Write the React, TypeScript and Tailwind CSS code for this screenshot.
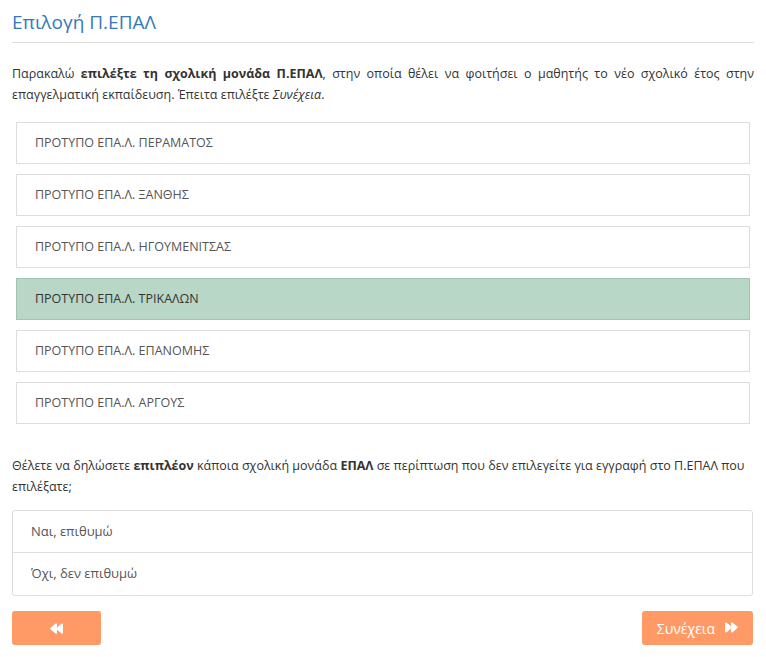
import React from 'react';

const SCHOOLS = [
  'ΠΡΟΤΥΠΟ ΕΠΑ.Λ. ΠΕΡΑΜΑΤΟΣ',
  'ΠΡΟΤΥΠΟ ΕΠΑ.Λ. ΞΑΝΘΗΣ',
  'ΠΡΟΤΥΠΟ ΕΠΑ.Λ. ΗΓΟΥΜΕΝΙΤΣΑΣ',
  'ΠΡΟΤΥΠΟ ΕΠΑ.Λ. ΤΡΙΚΑΛΩΝ',
  'ΠΡΟΤΥΠΟ ΕΠΑ.Λ. ΕΠΑΝΟΜΗΣ',
  'ΠΡΟΤΥΠΟ ΕΠΑ.Λ. ΑΡΓΟΥΣ',
];

const SELECTED = 3;

const DoubleArrow: React.FC<{ dir: 'left' | 'right' }> = ({ dir }) => (
  <svg
    width="14"
    height="12"
    viewBox="0 0 14 12"
    className={dir === 'left' ? 'rotate-180' : ''}
    fill="currentColor"
  >
    <path d="M1 1.2c0-.8.8-1.2 1.4-.8l5 4.2c.5.4.5 1.1 0 1.5l-5 4.3C1.8 10.8 1 10.4 1 9.6z" />
    <path d="M7 1.2c0-.8.8-1.2 1.4-.8l5 4.2c.5.4.5 1.1 0 1.5l-5 4.3c-.6.4-1.4 0-1.4-.8z" />
  </svg>
);

export default function App() {
  return (
    <div className="min-h-[657px] w-[766px] bg-white px-3 font-['Open_Sans',sans-serif] text-[#333]">
      <h1 className="pt-[8px] text-[19px] leading-[28px] text-[#337ab7]">Επιλογή Π.ΕΠΑΛ</h1>
      <hr className="mt-[6px] border-t border-[#dedede]" />

      <p className="mt-[20px] text-justify text-[12.5px] leading-[21px]">
        Παρακαλώ <b>επιλέξτε τη σχολική μονάδα Π.ΕΠΑΛ</b>, στην οποία θέλει να φοιτήσει ο μαθητής
        το νέο σχολικό έτος στην επαγγελματική εκπαίδευση. Έπειτα επιλέξτε <i>Συνέχεια</i>.
      </p>

      {/* School options */}
      <div className="mx-1 mt-[17px] flex flex-col gap-[10px]">
        {SCHOOLS.map((s, i) => (
          <div
            key={s}
            className={`flex h-[42px] items-center border pl-[18px] text-[12.5px] ${
              i === SELECTED
                ? 'border-[#a3c4b3] bg-[#b9d7c7] text-[#333]'
                : 'border-[#dddddd] bg-white text-[#555]'
            }`}
          >
            {s}
          </div>
        ))}
      </div>

      <p className="mt-[31px] text-[12.5px] leading-[21px] text-[#333]">
        Θέλετε να δηλώσετε <b>επιπλέον</b> κάποια σχολική μονάδα <b>ΕΠΑΛ</b> σε περίπτωση που δεν
        επιλεγείτε για εγγραφή στο Π.ΕΠΑΛ που επιλέξατε;
      </p>

      {/* Yes / no */}
      <div className="mt-[13px] mr-[1px] rounded-[3px] border border-[#dddddd] text-[13px] text-[#555]">
        <div className="flex h-[42px] items-center border-b border-[#dddddd] pl-[18px]">Ναι, επιθυμώ</div>
        <div className="flex h-[42px] items-center pl-[18px]">Όχι, δεν επιθυμώ</div>
      </div>

      <div className="mt-[15px] flex items-center justify-between pr-[1px]">
        <button
          type="button"
          className="flex h-[34px] w-[89px] items-center justify-center rounded-[3px] bg-[#ff9966] text-white"
        >
          <DoubleArrow dir="left" />
        </button>
        <button
          type="button"
          className="flex h-[34px] w-[111px] items-center justify-center gap-[9px] rounded-[3px] bg-[#ff9966] text-[14px] text-white"
        >
          Συνέχεια
          <DoubleArrow dir="right" />
        </button>
      </div>
    </div>
  );
}
